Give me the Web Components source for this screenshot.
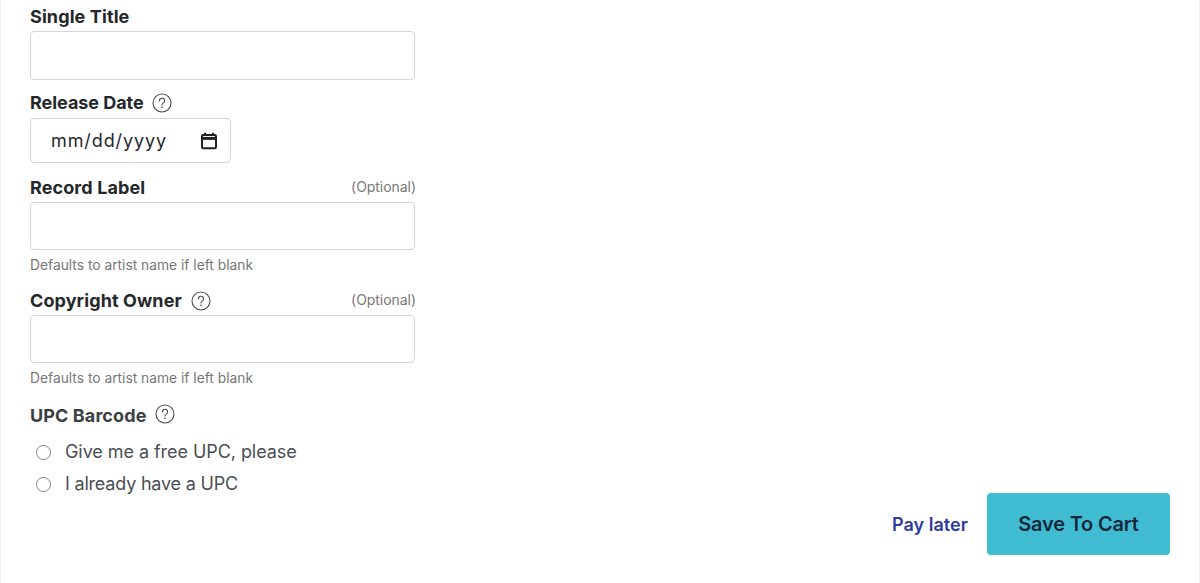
<!DOCTYPE html>
<html lang="en"><head><meta charset="utf-8"><title>Single</title>
<style>
html,body{margin:0;padding:0;background:#fff;height:583px;overflow:hidden}
body{font-family:Inter,"Liberation Sans",sans-serif}
</style></head><body>
<release-page>
  <form-field label="Single Title" style="--under:4px"></form-field>
  <form-field label="Release Date" help date style="--top:12px;--ls:-.05px;--help-gap:8px"></form-field>
  <form-field label="Record Label" optional hint="Defaults to artist name if left blank" style="--top:14px;--under:4px;--box:48px"></form-field>
  <form-field label="Copyright Owner" help optional hint="Defaults to artist name if left blank" style="--top:17px;--under:4px;--box:48px"></form-field>
  <radio-group label="UPC Barcode">
    <radio-row>Give me a free UPC, please</radio-row>
    <radio-row style="--ls:-.2px">I already have a UPC</radio-row>
  </radio-group>
  <action-bar slot="actions"></action-bar>
</release-page>
<script>
const helpIcon = `<svg width="20" height="20" viewBox="0 0 20 20" fill="none" aria-hidden="true"><circle cx="10" cy="10" r="9" stroke="#4a4f54" stroke-width="1.1"/><path d="M7.4 7.9a2.6 2.6 0 0 1 5.2 0c0 1.9-2.6 2-2.6 4" stroke="#4a4f54" stroke-width="1.1" stroke-linecap="round"/><circle cx="10" cy="14.4" r=".8" fill="#4a4f54"/></svg>`;
class ReleasePage extends HTMLElement{constructor(){super();this.attachShadow({mode:'open'}).innerHTML=`<style>
:host{display:flex;box-sizing:border-box;height:583px;border-left:1px solid #f1f1f1;border-right:1px solid #f1f1f1}
.form{width:385px;margin-left:29px;padding-top:6px;display:flex;flex-direction:column}
.side{flex:1;display:flex;justify-content:flex-end;align-items:flex-end;padding:0 29px 28px 0}
</style><div class="form"><slot></slot></div><div class="side"><slot name="actions"></slot></div>`}}
customElements.define('release-page',ReleasePage);
class FormField extends HTMLElement{connectedCallback(){
 const a=n=>this.getAttribute(n),h=n=>this.hasAttribute(n);
 this.attachShadow({mode:'open'}).innerHTML=`<style>
:host{display:block;margin-top:var(--top,0)}
.head{display:flex;align-items:center;height:21px;margin-bottom:var(--under,3px)}
.label{font:700 18px/21px Inter,"Liberation Sans",sans-serif;color:#25282b;letter-spacing:var(--ls,.1px)}
.head svg{margin-left:var(--help-gap,9px);display:block}
.opt{margin-left:auto;margin-right:-1px;margin-bottom:2px;font:400 14px/19px Inter,"Liberation Sans",sans-serif;color:#777;letter-spacing:-.05px}
.box{box-sizing:border-box;height:var(--box,49px);border:1px solid #d3d5d7;border-radius:4px;background:#fff}
.date{box-sizing:border-box;width:201px;height:45px;margin-top:5px;border:1px solid #d3d5d7;border-radius:4px;display:flex;align-items:center;justify-content:space-between;padding:0 12px 0 20px;font:400 18px/24px Inter,"Liberation Sans",sans-serif;color:#25282b;letter-spacing:.9px}
.date svg{margin:0;display:block}
.hint{font:400 13.8px/16px Inter,"Liberation Sans",sans-serif;color:#777;margin-top:7px}
</style><div class="head"><span class="label">${a('label')}</span>${h('help')?helpIcon:''}${h('optional')?'<span class="opt">(Optional)</span>':''}</div>
${h('date')?`<div class="date"><span>mm/dd/yyyy</span><svg width="18" height="18" viewBox="0 0 18 18" fill="none"><rect x="2" y="3" width="14" height="13.2" rx="1.2" stroke="#1f2225" stroke-width="2"/><path d="M1.5 6.4h15" stroke="#1f2225" stroke-width="3"/><path d="M5 .8v3M13 .8v3" stroke="#1f2225" stroke-width="2"/></svg></div>`:'<div class="box"></div>'}
${a('hint')?`<div class="hint">${a('hint')}</div>`:''}`}}
customElements.define('form-field',FormField);
class RadioGroup extends HTMLElement{connectedCallback(){
 this.attachShadow({mode:'open'}).innerHTML=`<style>
:host{display:block;margin-top:19px}
.head{display:flex;align-items:center;height:21px;margin-bottom:13px}
.label{font:700 18px/21px Inter,"Liberation Sans",sans-serif;color:#3b3f44;letter-spacing:.1px}
svg{margin-left:9px;margin-top:-3px;display:block}
.rows{display:flex;flex-direction:column;gap:6px}
</style><div class="head"><span class="label">${this.getAttribute('label')}</span>${helpIcon}</div><div class="rows"><slot></slot></div>`}}
customElements.define('radio-group',RadioGroup);
class RadioRow extends HTMLElement{constructor(){super();this.attachShadow({mode:'open'}).innerHTML=`<style>
:host{display:flex;align-items:center;height:26px;padding-left:6px;font:400 18px/26px Inter,"Liberation Sans",sans-serif;color:#4a4f54;letter-spacing:var(--ls,-.06px)}
i{box-sizing:border-box;width:15px;height:15px;border:1.5px solid #858585;border-radius:50%;margin-right:14px;background:#fff}
</style><i></i><span><slot></slot></span>`}}
customElements.define('radio-row',RadioRow);
class ActionBar extends HTMLElement{constructor(){super();this.attachShadow({mode:'open'}).innerHTML=`<style>
:host{display:flex;align-items:center;gap:19px}
a{font:600 18px/21px Inter,"Liberation Sans",sans-serif;color:#2f3a9e;letter-spacing:.05px}
button{box-sizing:border-box;width:183px;height:62px;border:0;border-radius:4px;background:#3fbcd2;color:#14283c;font:600 20px/24px Inter,"Liberation Sans",sans-serif;letter-spacing:-.2px;padding:0}
</style><a>Pay later</a><button>Save To Cart</button>`}}
customElements.define('action-bar',ActionBar);
</script></body></html>
